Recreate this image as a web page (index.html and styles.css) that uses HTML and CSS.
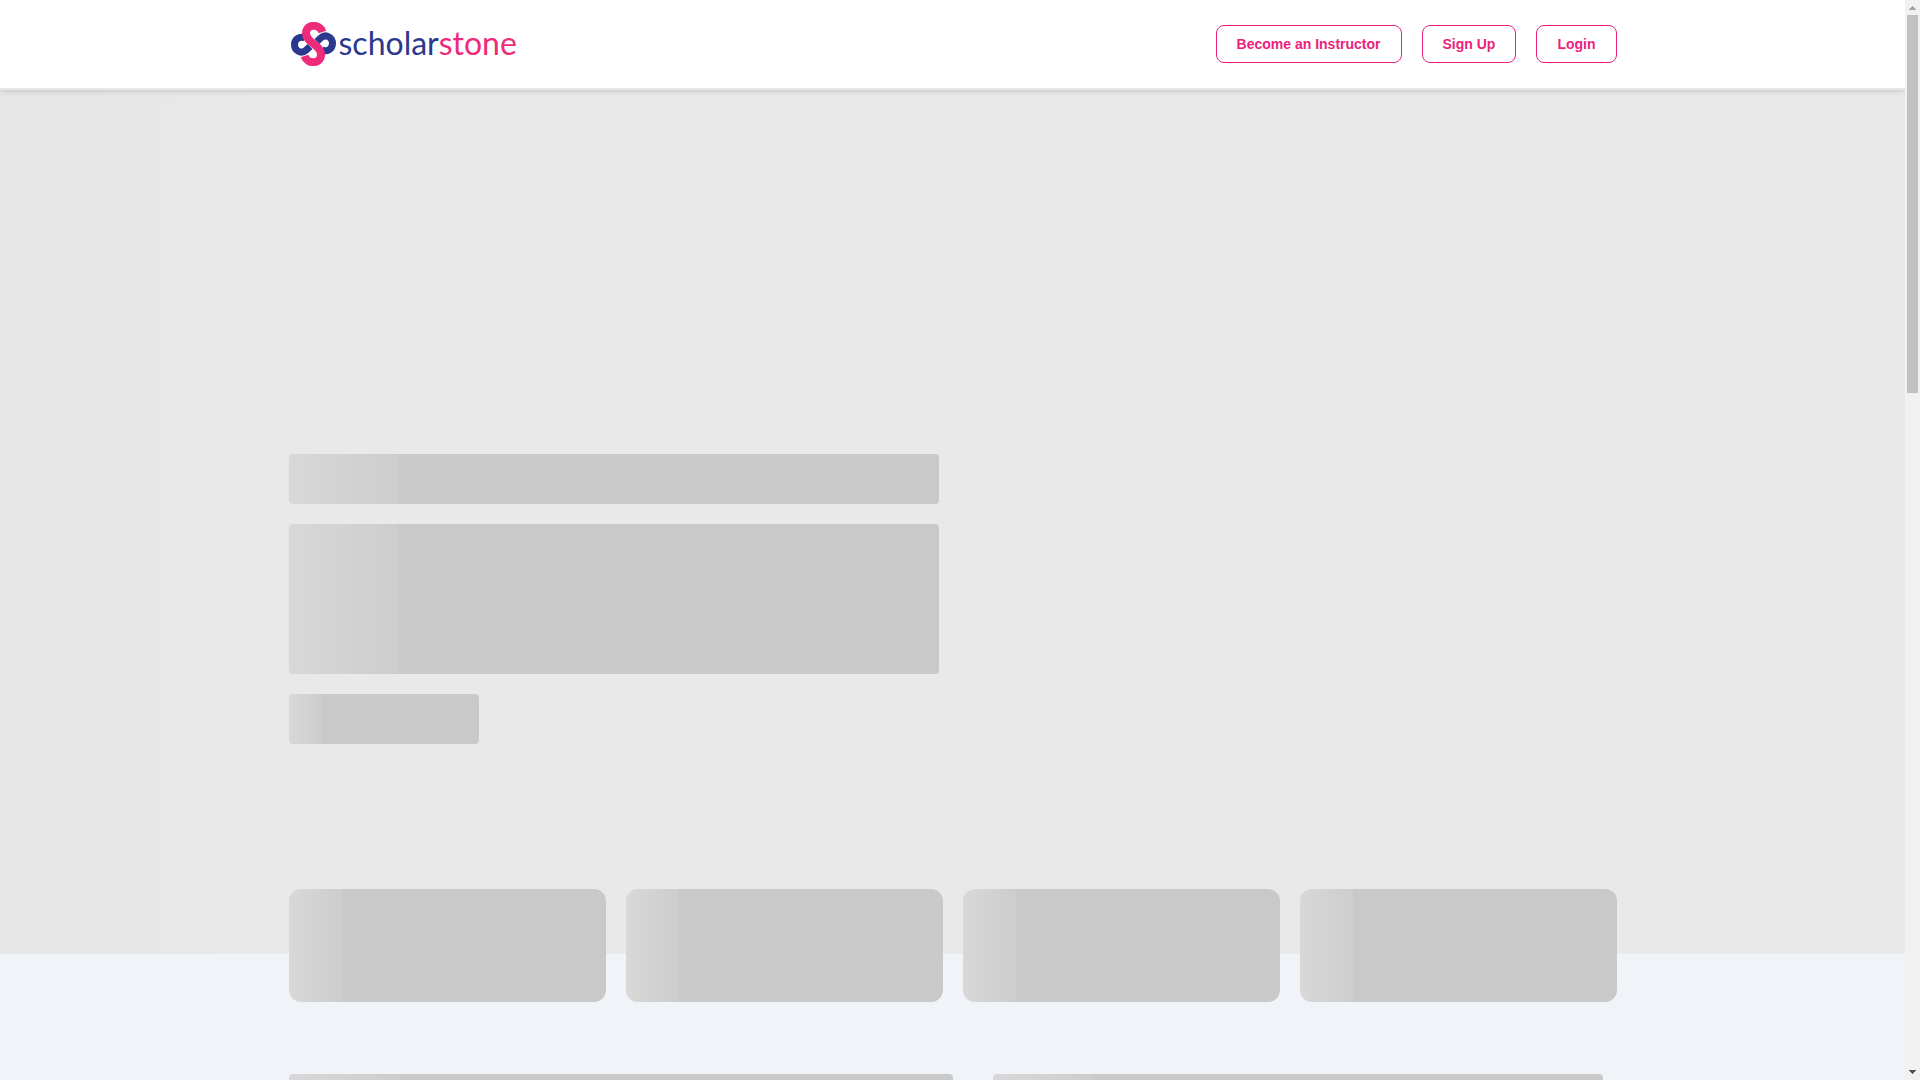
FILE: index.html
```html
<!DOCTYPE html>
<html lang="en">
<head>
<meta charset="utf-8">
<title>Scholarstone</title>
<link rel="stylesheet" href="styles.css">
</head>
<body>
<div class="window">
  <div class="page">
    <header class="header">
      <div class="container header-row">
        <a class="logo" href="#" aria-label="scholarstone">
          <svg class="logo-mark" viewBox="0 0 45 44" aria-hidden="true">
            <g fill="none">
              <path class="navy" d="M14 16C8.500 13.500 3.500 17.500 3.500 22.500C3.500 28.500 9.500 32 14 29C16 27.500 17 26.500 19 24.500"/>
              <path class="navy" d="M31 28C36.500 30.500 41.500 26.500 41.500 21.500C41.500 15.500 35.500 12 31 15C29 16.500 28 17.500 26 19.500"/>
              <path class="pink" d="M31.500 10C28.500 1.500 15 1.500 15 11.500C15 20.500 30 23 30 32.500C30 42.500 16.500 42.500 13.500 34"/>
            </g>
          </svg>
          <span class="logo-text">scholar<span class="logo-accent">stone</span></span>
        </a>
        <nav class="nav">
          <button class="btn" type="button">Become an Instructor</button>
          <button class="btn" type="button">Sign Up</button>
          <button class="btn" type="button">Login</button>
        </nav>
      </div>
    </header>
    <main>
      <section class="hero">
        <div class="container hero-body">
          <div class="skeleton line"></div>
          <div class="skeleton block"></div>
          <div class="skeleton action"></div>
        </div>
      </section>
      <section class="container cards">
        <div class="skeleton card"></div>
        <div class="skeleton card"></div>
        <div class="skeleton card"></div>
        <div class="skeleton card"></div>
      </section>
      <section class="container columns">
        <div class="skeleton column-main"></div>
        <div class="skeleton column-side"></div>
      </section>
    </main>
  </div>
  <div class="scrollbar" aria-hidden="true">
    <svg class="arrow arrow-up" viewBox="0 0 7 4"><path d="M3 0h1v1h1v1h1v1h1v1H0V3h1V2h1V1h1z"/></svg>
    <div class="track"><div class="thumb"></div></div>
    <svg class="arrow arrow-down" viewBox="0 0 7 4"><path d="M0 0h7v1H6v1H5v1H4v1H3V3H2V2H1V1H0z"/></svg>
  </div>
</div>
</body>
</html>
```
FILE: styles.css
```css
* { box-sizing: border-box; }
body {
  margin: 0;
  background: #f0f4f9;
  font-family: "Liberation Sans", Arial, sans-serif;
}
.window { display: flex; height: 100vh; overflow: hidden; }
.page { flex: 1; min-width: 0; overflow: hidden; }
.container { width: 100%; max-width: 1328px; margin: 0 auto; }

.header {
  position: relative;
  z-index: 1;
  background: #fff;
  border-bottom: 2px solid #e7e7e7;
  box-shadow: 0 1px 6px rgba(0, 0, 0, 0.16);
}
.header-row { display: flex; align-items: center; justify-content: space-between; height: 88px; }
.logo { display: flex; align-items: center; gap: 3px; padding-left: 2px; text-decoration: none; }
.logo-mark { width: 45px; height: 44px; }
.navy { stroke: #2b388f; stroke-width: 7px; }
.pink { stroke: #ee2a7b; stroke-width: 8px; }
.logo-text { padding-bottom: 2px; color: #2b388f; font: 32px/40px Lato, sans-serif; }
.logo-accent { color: #ee2a7b; }
.nav { display: flex; gap: 20px; }
.btn {
  height: 38px;
  padding: 0 20px;
  border: 1px solid #ed217c;
  border-radius: 8px;
  background: #fff;
  color: #ed217c;
  font: bold 14px/16px "Liberation Sans", Arial, sans-serif;
}

.hero {
  height: 864px;
  padding-top: 364px;
  background: linear-gradient(90deg, #e7e7e7, #e9e9e9 17%);
}
.hero-body { display: flex; flex-direction: column; gap: 20px; }
.skeleton {
  border-radius: 4px;
  background: linear-gradient(90deg, #d8d8d8, #cdcdcd 16.7%, #c9c9c9 16.7%);
}
.line { width: 650px; max-width: 100%; height: 50px; }
.block { width: 650px; max-width: 100%; height: 150px; }
.action { width: 190px; height: 50px; }

.cards { display: grid; grid-template-columns: repeat(4, 1fr); gap: 20px; margin-top: -65px; }
.card { height: 113px; border-radius: 12px; }
.columns { display: flex; gap: 40px; padding-right: 14px; margin-top: 72px; }
.column-main { width: 664px; height: 400px; }
.column-side { flex: 1; height: 400px; }

.scrollbar {
  display: flex;
  flex-direction: column;
  align-items: center;
  width: 15px;
  padding: 6px 0;
  background: #f1f1f1;
}
.arrow { width: 7px; height: 4px; }
.arrow-up { fill: #a3a3a3; }
.arrow-down { fill: #505050; }
.track { flex: 1; padding: 5px 0; }
.thumb { width: 11px; height: 36%; background: #c1c1c1; }
```
